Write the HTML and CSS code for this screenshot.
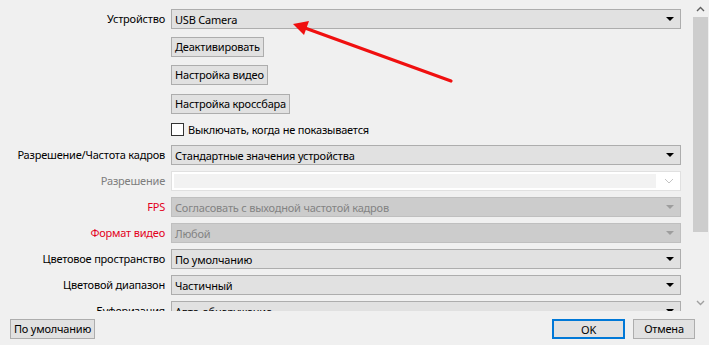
FILE: index.html
```html
<!DOCTYPE html>
<html lang="ru">
    <head>
        <meta charset="utf-8" />
        <title>Свойства: Видеозахват</title>
        <link rel="stylesheet" href="styles.css">
    </head>
    <body>
        <div class="window">
            <div class="top">
                <div class="scroll-area">
                    <div class="form">
                        <span class="label">Устройство</span>
                        <div class="combo"><span class="value">USB Camera</span><i class="arrow"></i></div>

                        <div class="field gap-btn"><button class="btn">Деактивировать</button></div>
                        <div class="field gap-btn"><button class="btn">Настройка видео</button></div>
                        <div class="field gap-btn3"><button class="btn">Настройка кроссбара</button></div>

                        <div class="field check-row">
                            <span class="checkbox"></span>
                            <span>Выключать, когда не показывается</span>
                        </div>

                        <span class="label">Разрешение/Частота кадров</span>
                        <div class="combo"><span class="value">Стандартные значения устройства</span><i class="arrow"></i></div>

                        <span class="label grey">Разрешение</span>
                        <div class="edit-combo">
                            <span class="edit"></span>
                            <svg class="chevron" width="10" height="6" viewBox="0 0 10 6"><path d="M1 1 L5 5 L9 1" fill="none" stroke="#c4c4c4" stroke-width="1"/></svg>
                        </div>

                        <span class="label red">FPS</span>
                        <div class="combo disabled"><span class="value">Согласовать с выходной частотой кадров</span><i class="arrow"></i></div>

                        <span class="label red">Формат видео</span>
                        <div class="combo disabled"><span class="value">Любой</span><i class="arrow"></i></div>

                        <span class="label">Цветовое пространство</span>
                        <div class="combo"><span class="value">По умолчанию</span><i class="arrow"></i></div>

                        <span class="label">Цветовой диапазон</span>
                        <div class="combo"><span class="value">Частичный</span><i class="arrow"></i></div>

                        <span class="label">Буферизация</span>
                        <div class="combo"><span class="value">Авто-обнаружение</span><i class="arrow"></i></div>
                    </div>
                </div>

                <div class="scrollbar">
                    <svg class="sb-arrow" width="9" height="6" viewBox="0 0 9 6"><path d="M1 5 L4.5 1.5 L8 5" fill="none" stroke="#606060" stroke-width="1.4"/></svg>
                    <div class="sb-track"><div class="sb-thumb"></div></div>
                    <svg class="sb-arrow" width="9" height="6" viewBox="0 0 9 6"><path d="M1 1 L4.5 4.5 L8 1" fill="none" stroke="#a0a0a0" stroke-width="1.4"/></svg>
                </div>
            </div>

            <div class="bottom">
                <button class="btn">По умолчанию</button>
                <div class="spacer"></div>
                <button class="btn ok">OK</button>
                <button class="btn cancel">Отмена</button>
            </div>

            <!-- красная стрелка поверх формы -->
            <svg class="pointer" width="709" height="345" viewBox="0 0 709 345">
                <line x1="451" y1="81" x2="305" y2="28" stroke="#f01010" stroke-width="3.2" stroke-linecap="round"/>
                <polygon points="293,24 309,21 304,35" fill="#f01010"/>
            </svg>
        </div>
    </body>
</html>
```

FILE: styles.css
```css
html, body {
    margin: 0;
    padding: 0;
}

body {
    background-color: #f0f0f0;
    font-family: "Noto Sans", "Liberation Sans", sans-serif;
    font-size: 11px;
    letter-spacing: -0.2px;
    color: #000;
}

.window {
    position: relative;
    width: 709px;
    height: 345px;
    overflow: hidden;
    display: flex;
    flex-direction: column;
}

.top {
    display: flex;
    height: 311px;
}

.scroll-area {
    flex: 1;
    overflow: hidden;
}

.form {
    display: grid;
    grid-template-columns: 165px 510px;
    column-gap: 6px;
    row-gap: 6px;
    align-items: center;
    padding-top: 9px;
}

.label {
    text-align: right;
    white-space: nowrap;
    line-height: 20px;
}

.label.grey {
    color: #7d7d7d;
}

.label.red {
    color: #e3001b;
}

.field {
    grid-column: 2;
    display: flex;
    align-items: center;
}

.gap-btn {
    margin-top: 2px;
}

.gap-btn3 {
    margin-top: 3px;
}

.btn {
    font-family: inherit;
    font-size: 11px;
    letter-spacing: -0.2px;
    height: 20px;
    padding: 0 3px;
    background-color: #e1e1e1;
    border: 1px solid #adadad;
    border-radius: 0;
    color: #000;
    line-height: 18px;
}

.check-row {
    height: 19px;
    gap: 4px;
}

.checkbox {
    width: 11px;
    height: 11px;
    border: 1px solid #333;
    background-color: #fff;
}

.combo {
    height: 20px;
    box-sizing: border-box;
    border: 1px solid #adadad;
    background-color: #e1e1e1;
    display: flex;
    align-items: center;
    padding: 0 6px 0 3px;
}

.combo .value {
    flex: 1;
    white-space: nowrap;
}

.arrow {
    width: 0;
    height: 0;
    border-left: 4px solid transparent;
    border-right: 4px solid transparent;
    border-top: 4px solid #000;
}

.combo.disabled {
    background-color: #cccccc;
    border-color: #bfbfbf;
    color: #838383;
}

.combo.disabled .arrow {
    border-top-color: #9d9d9d;
}

.edit-combo {
    height: 20px;
    box-sizing: border-box;
    border: 1px solid #e0e0e0;
    background-color: #fff;
    display: flex;
    align-items: center;
    padding: 2px;
}

.edit {
    flex: 1;
    align-self: stretch;
    background-color: #f2f2f2;
}

.chevron {
    margin: 0 4px 0 8px;
}

.scrollbar {
    width: 20px;
    display: flex;
    flex-direction: column;
    align-items: center;
    padding-left: 2px;
    box-sizing: border-box;
}

.sb-arrow {
    margin: 6px 0 5px;
}

.sb-track {
    flex: 1;
    width: 15px;
}

.sb-thumb {
    height: 215px;
    background-color: #cdcdcd;
}

.bottom {
    display: flex;
    align-items: center;
    gap: 8px;
    padding: 8px 14px 6px 10px;
}

.spacer {
    flex: 1;
}

.ok {
    width: 73px;
    border: 2px solid #0078d7;
}

.cancel {
    width: 62px;
}

.pointer {
    position: absolute;
    left: 0;
    top: 0;
    pointer-events: none;
}
```
